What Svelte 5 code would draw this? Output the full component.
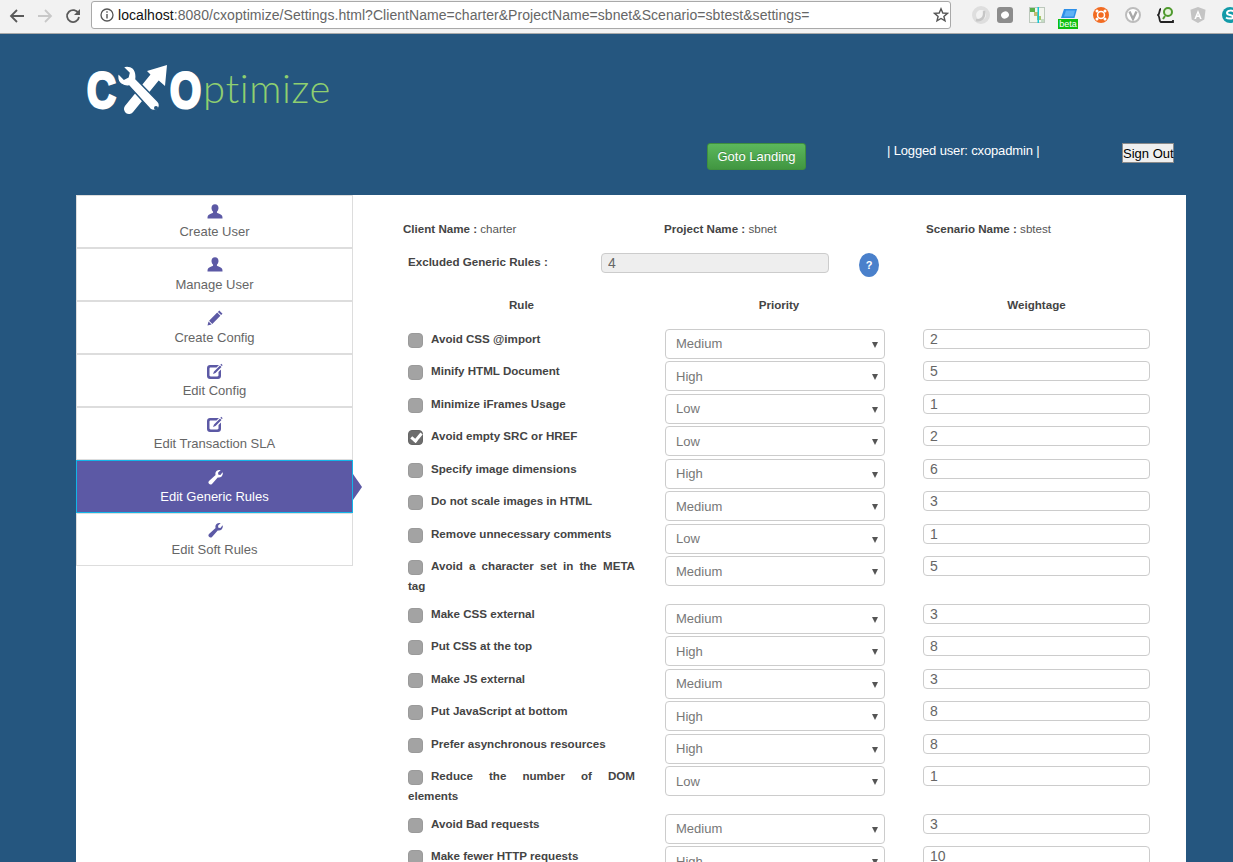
<script>
  const nav = [
    { label: 'Create User', icon: 'user' },
    { label: 'Manage User', icon: 'user' },
    { label: 'Create Config', icon: 'pencil' },
    { label: 'Edit Config', icon: 'edit' },
    { label: 'Edit Transaction SLA', icon: 'edit' },
    { label: 'Edit Generic Rules', icon: 'wrench', active: true },
    { label: 'Edit Soft Rules', icon: 'wrench' }
  ];
  const rules = [
    ['Avoid CSS @import', 'Medium', 2],
    ['Minify HTML Document', 'High', 5],
    ['Minimize iFrames Usage', 'Low', 1],
    ['Avoid empty SRC or HREF', 'Low', 2, true],
    ['Specify image dimensions', 'High', 6],
    ['Do not scale images in HTML', 'Medium', 3],
    ['Remove unnecessary comments', 'Low', 1],
    ['Avoid a character set in the META tag', 'Medium', 5],
    ['Make CSS external', 'Medium', 3],
    ['Put CSS at the top', 'High', 8],
    ['Make JS external', 'Medium', 3],
    ['Put JavaScript at bottom', 'High', 8],
    ['Prefer asynchronous resources', 'High', 8],
    ['Reduce the number of DOM elements', 'Low', 1],
    ['Avoid Bad requests', 'Medium', 3],
    ['Make fewer HTTP requests', 'High', 10]
  ];
</script>

{#snippet glyph(name)}
  <svg class="glyph" viewBox="0 0 16 16" aria-hidden="true">
    {#if name === 'user'}
      <path d="M8 0.300c-2.200 0-3.500 1.600-3.500 3.700 0 1.500 0.700 2.800 1.500 3.600 0.300 0.400 0.200 1-0.300 1.300-1.800 0.800-4.300 1.300-4.900 3.100-0.300 0.800-0.300 1.600-0.300 2.500h15c0-0.900 0-1.700-0.300-2.500-0.600-1.800-3.100-2.300-4.900-3.100-0.500-0.300-0.600-0.900-0.300-1.300 0.800-0.800 1.500-2.100 1.500-3.600 0-2.100-1.300-3.700-3.500-3.700z"/>
    {:else if name === 'pencil'}
      <path d="M12.300 0.500l3.200 3.200-1.400 1.400-3.200-3.200zM10.200 2.600l3.200 3.200-8.100 8.100-3.200-3.200zM1.500 11.400l3.100 3.100-4.100 1z"/>
    {:else if name === 'edit'}
      <path d="M3 2h9l-2.500 2.500H3.700c-.7 0-1.200.5-1.200 1.200v6.600c0 .7.500 1.200 1.200 1.200h6.600c.7 0 1.200-.5 1.200-1.200V9l2.500-2.500V13c0 1.700-1.300 3-3 3H3c-1.700 0-3-1.300-3-3V5c0-1.700 1.300-3 3-3z"/>
      <path d="M13 2.500l1.500 1.500-6 6-2.500 1 1-2.500zM14.300 0.800l1.400 1.400-.9.900-1.400-1.400z"/>
    {:else}
      <path d="M15.600 3.300c.5 1.500.1 3.100-1 4.200-1.100 1-2.600 1.300-3.900.9L5 14.900c-.8.800-2.200.8-3-.1-.8-.8-.8-2.100 0-2.900l6.600-5.800c-.5-1.400-.2-3 .9-4.100C10.600 1 12.200.6 13.700 1.100L11 3.700l.4 2 2 .4z"/>
    {/if}
  </svg>
{/snippet}

<div class="page">
  <div class="chrome">
    <svg class="tool" viewBox="0 0 16 16"><path d="M15 8H2.500M8 2L2 8l6 6" fill="none" stroke="#5a5a5a" stroke-width="1.800"/></svg>
    <svg class="tool" viewBox="0 0 16 16"><path d="M1 8h12.500M8 2l6 6-6 6" fill="none" stroke="#c8c8c8" stroke-width="1.800"/></svg>
    <svg class="tool" viewBox="0 0 16 16"><path d="M13.500 5.500A6 6 0 1 0 14 9" fill="none" stroke="#5a5a5a" stroke-width="1.800"/><path d="M15 1v6H9z" fill="#5a5a5a"/></svg>
    <div class="omni">
      <svg class="info" viewBox="0 0 14 14"><circle cx="7" cy="7" r="6" fill="none" stroke="#555" stroke-width="1.300"/><path d="M6.300 6h1.400v4.500H6.300zM6.300 3.300h1.400v1.400H6.300z" fill="#555"/></svg>
      <span class="url"><b>localhost</b>:8080/cxoptimize/Settings.html?ClientName=charter&amp;ProjectName=sbnet&amp;Scenario=sbtest&amp;settings=</span>
      <svg class="star" viewBox="0 0 16 16"><path d="M8 1.800l1.800 4.200 4.600.4-3.500 3 1.100 4.500L8 11.500l-4 2.400 1.100-4.500-3.500-3 4.600-.4z" fill="none" stroke="#555" stroke-width="1.400"/></svg>
    </div>
    <div class="exts">
      <svg class="ext e1" viewBox="0 0 20 20"><circle cx="10" cy="10" r="7" fill="none" stroke="#dedede" stroke-width="4"/><path d="M5 15c5 1 9-2 8-9" fill="none" stroke="#c6c6c6" stroke-width="2.500"/></svg>
      <svg class="ext e2" viewBox="0 0 16 16"><rect width="16" height="16" rx="3" fill="#8c8c8c"/><ellipse cx="8" cy="8" rx="4" ry="3.500" fill="#fff" transform="rotate(-30 8 8)"/></svg>
      <svg class="ext e3" viewBox="0 0 16 16"><rect x=".5" y=".5" width="15" height="15" fill="#f2f5ee" stroke="#bcc8bc"/><rect x="1" y="1" width="5" height="4" fill="#59b04a"/><rect x="5" y="5" width="4" height="4" fill="#c2bb6e"/><rect x="8" y="9" width="4" height="4" fill="#a7c86a"/><rect x="12" y="12" width="3" height="3" fill="#c4dcc4"/><rect x="8.500" y="0" width="1.500" height="16" fill="#14c7d3"/></svg>
      <div class="ext e4">
        <svg viewBox="0 0 16 11"><path d="M3 1h13l-2.500 9H0z" fill="#2d8fe8"/><path d="M5 2.500h9l-1.500 6H3z" fill="#5fb2f5"/></svg>
        <span class="beta">beta</span>
      </div>
      <svg class="ext e5" viewBox="0 0 16 16"><circle cx="8" cy="8" r="8" fill="#f26b21"/><circle cx="8" cy="8" r="3.500" fill="none" stroke="#fff" stroke-width="1.500"/><circle cx="4" cy="4" r="1.500" fill="#fff"/><circle cx="12" cy="4" r="1.500" fill="#fff"/><circle cx="4" cy="12" r="1.500" fill="#fff"/><circle cx="12" cy="12" r="1.500" fill="#fff"/></svg>
      <svg class="ext e6" viewBox="0 0 16 16"><circle cx="8" cy="8" r="7" fill="#fff" stroke="#bdbdbd" stroke-width="2"/><path d="M4.500 4.500L8 12l3.500-7.500" fill="none" stroke="#a9a9a9" stroke-width="2.400"/></svg>
      <svg class="ext e7" viewBox="0 0 18 18"><path d="M4 3C2 3 3 8 1 9c2 1 1 7 3 7h12v-2" fill="none" stroke="#222" stroke-width="1.800"/><circle cx="11" cy="6" r="4" fill="#e8f4e0" stroke="#4f9a2e" stroke-width="2"/><path d="M8 10l-2 3" stroke="#4f9a2e" stroke-width="2"/></svg>
      <svg class="ext e8" viewBox="0 0 16 16"><path d="M8 0l7.500 2.700-1.200 9.800L8 16l-6.300-3.500L.5 2.700z" fill="#c4c4c4"/><path d="M8 3L4.300 12h1.700l.8-2h2.400l.8 2h1.700zM7.300 8.500L8 6.500l.7 2z" fill="#fff"/></svg>
      <svg class="ext e9" viewBox="0 0 16 16"><circle cx="8" cy="8" r="8" fill="#129aa8"/><path d="M12 5c-1-2-7-2-7 1 0 3 6 1 6 4 0 2-5 2-7 .5" fill="none" stroke="#fff" stroke-width="2"/></svg>
    </div>
  </div>

  <header>
    <div class="logo">
      <span class="cx">C</span>
      <svg class="tools" viewBox="0 0 50 50">
        <path d="M12 44L38 12" stroke="#fff" stroke-width="10" stroke-linecap="round"/>
        <path d="M30 6L50 0l-2 21-8-7-5-3z" fill="#fff"/>
        <path d="M10 1c-2 0-3 .5-4 1l6 6-1 4-4 2-6-6c-1 5 0 9 3 11 3 2 6 2.500 8 2l21 23c2 2 6 2 8 0 2-2 2-5.500 0-7.500L19 14c.5-4 0-8-3-11-2-2-4-2-6-2z" fill="#fff" stroke="#25567f" stroke-width="1.500"/>
        <circle cx="39" cy="43" r="2" fill="#25567f"/>
      </svg>
      <span class="cx o">O</span>
      <span class="ptimize">ptimize</span>
    </div>
    <div class="actions">
      <button class="goto">Goto Landing</button>
      <span class="logged">| Logged user: cxopadmin |</span>
      <button class="signout">Sign Out</button>
    </div>
  </header>

  <main>
    <nav>
      {#each nav as item}
        <a class="item" class:active={item.active} href="#top">
          {@render glyph(item.icon)}
          <span>{item.label}</span>
        </a>
      {/each}
    </nav>

    <section>
      <div class="names">
        <div><b>Client Name :</b> charter</div>
        <div><b>Project Name :</b> sbnet</div>
        <div><b>Scenario Name :</b> sbtest</div>
      </div>
      <div class="excluded">
        <b>Excluded Generic Rules :</b>
        <input class="field readonly" value="4" readonly />
        <span class="help">?</span>
      </div>
      <div class="grid heads">
        <b>Rule</b><b>Priority</b><b>Weightage</b>
      </div>
      <div class="grid">
        {#each rules as [name, prio, weight, checked]}
          <label class="rule"><input type="checkbox" checked={!!checked} /><span>{name}</span></label>
          <div class="select">
            <select class="prio" value={prio}>
              <option>Medium</option><option>High</option><option>Low</option>
            </select>
          </div>
          <input class="field" value={weight} />
        {/each}
      </div>
    </section>
  </main>
</div>

<style>
  :global(html), :global(body) { margin: 0; height: 862px; overflow: hidden; }
  .page { height: 862px; overflow: hidden; background: #25567f; font-family: "Liberation Sans", Arial, sans-serif; }

  .chrome { height: 33px; background: #f2f2f2; border-bottom: 1px solid #a9a9a9; display: flex; align-items: center; position: relative; }
  .tool { width: 16px; height: 16px; margin-left: 12px; flex: none; margin-top: -2px; }
  .tool:first-child { margin-left: 9px; }
  .omni { margin-left: 10px; width: 860px; height: 28px; box-sizing: border-box; background: #fff; border: 1px solid #a9a9a9; border-radius: 3px; display: flex; align-items: center; flex: none; margin-top: -3px; }
  .info { width: 14px; height: 14px; margin-left: 8px; flex: none; }
  .url { margin-left: 4px; font-size: 14px; letter-spacing: .05px; color: #666; white-space: nowrap; flex: 1; }
  .url b { font-weight: normal; color: #111; }
  .star { width: 16px; height: 16px; margin-right: 1px; flex: none; }
  .exts { display: flex; align-items: center; flex: none; margin-top: -3px; }
  .ext { width: 16px; height: 16px; flex: none; }
  .e1 { width: 20px; height: 20px; margin-left: 20px; }
  .e2 { margin-left: 6px; }
  .e3 { margin-left: 16px; }
  .e4 { margin-left: 16px; position: relative; height: 16px; }
  .e4 svg { display: block; width: 16px; height: 11px; margin-top: 1px; }
  .beta { position: absolute; left: -3px; top: 12px; width: 20px; height: 10px; background: #0fbf0f; color: #fff; font-size: 9px; line-height: 10px; text-align: center; }
  .e5 { margin-left: 16px; }
  .e6 { margin-left: 16px; }
  .e7 { margin-left: 16px; width: 18px; height: 18px; }
  .e8 { margin-left: 15px; }
  .e9 { margin-left: 16px; }

  header { height: 161px; padding-left: 76px; box-sizing: border-box; }
  .logo { display: flex; align-items: center; height: 109px; padding-left: 11px; box-sizing: border-box; color: #fff; }
  .cx { display: inline-block; width: 29px; flex: none; font-weight: 700; font-size: 50px; line-height: 1; margin-top: 4px; transform: scaleX(.8); transform-origin: left center; -webkit-text-stroke: 3px #fff; }
  .tools { width: 50px; height: 50px; margin: 3px 3px 0 1px; flex: none; }
  .ptimize { font-family: Lato, sans-serif; font-weight: 300; font-size: 40px; letter-spacing: .6px; color: #8fcf70; margin-left: 4px; margin-top: -1px; line-height: 1; }

  .actions { display: flex; align-items: flex-start; }
  button { font-family: inherit; }
  .goto { margin-left: 631px; width: 99px; height: 27px; padding: 0; font-size: 13px; color: #fff; background: linear-gradient(#5cb85c, #419641); border: 1px solid #3e8f3e; border-radius: 3px; text-shadow: 0 -1px 0 rgba(0,0,0,.2); }
  .logged { margin-left: 81px; font-size: 13px; letter-spacing: -.15px; line-height: 15px; color: #fff; width: 235px; }
  .signout { width: 52px; height: 20px; padding: 0; font-size: 13px; color: #000; background: #efefef; border: 1px solid #8a8a8a; white-space: nowrap; }

  main { width: 1110px; margin-left: 76px; background: #fff; display: flex; align-items: flex-start; min-height: 667px; }
  nav { width: 277px; flex: none; }
  .item { position: relative; display: flex; flex-direction: column; align-items: center; height: 53px; box-sizing: border-box; padding-top: 8px; border: 1px solid #ddd; color: #666; font-size: 13px; line-height: 20px; text-decoration: none; }
  .glyph { width: 16px; height: 16px; fill: #5c59a5; display: block; margin-bottom: 2px; }
  .item.active { background: #5c59a5; color: #fff; border-color: #12b5e8; }
  .item.active .glyph { fill: #fff; }
  .item.active::after { content: ""; position: absolute; right: -10px; top: 13px; border-left: 9px solid #5c59a5; border-top: 13px solid transparent; border-bottom: 13px solid transparent; }

  section { flex: 1; padding-left: 50px; font-size: 11.6px; color: #555; }
  section b { color: #444; }
  .names { display: grid; grid-template-columns: 261px 262px 1fr; padding-top: 26px; line-height: 15px; }
  .excluded { display: flex; align-items: flex-start; margin-top: 17px; padding-left: 5px; height: 44px; line-height: 20px; }
  .excluded b { width: 193px; flex: none; margin-top: -1px; }
  .field { box-sizing: border-box; height: 20px; width: 227px; padding: 0 6px; font: 14px "Liberation Sans", Arial, sans-serif; color: #666; background: #fff; border: 1px solid #ccc; border-radius: 4px; outline: none; }
  .readonly { width: 228px; background: #eee; flex: none; }
  .help { margin-left: 30px; margin-top: 0; width: 20px; height: 24px; border-radius: 50%; background: #4a80cb; color: #fff; font-weight: 700; font-size: 11px; line-height: 25px; text-align: center; flex: none; }

  .grid { display: grid; grid-template-columns: 227px 220px 235px; column-gap: 30px; padding-left: 5px; align-items: start; }
  .grid > :nth-child(3n+3) { margin-left: 8px; }
  .heads { height: 31.900px; text-align: center; line-height: 15px; }
  .heads b:nth-child(2) { padding-left: 8px; }
  .rule { display: block; font-weight: 700; color: #444; line-height: 20px; text-align: justify; margin-bottom: 7.500px; }
  .rule input { appearance: none; width: 15px; height: 15px; margin: 0 8px 0 0; vertical-align: -5px; border-radius: 4px; background: #a3a3a3; border: 1px solid #9a9a9a; box-sizing: border-box; position: relative; }
  .rule input:checked { background: #6d6d6d; border-color: #666; }
  .rule input:checked::after { content: ""; position: absolute; left: 3.500px; top: 0; width: 4px; height: 8px; border: solid #fff; border-width: 0 3px 3px 0; transform: rotate(40deg); }
  .select { position: relative; height: 32.500px; }
  .select::after { content: ""; position: absolute; right: 7px; top: 13px; border-top: 6px solid #555; border-left: 3px solid transparent; border-right: 3px solid transparent; pointer-events: none; }
  .prio { appearance: none; height: 30px; width: 220px; box-sizing: border-box; padding: 0 10px; font: 13px "Liberation Sans", Arial, sans-serif; color: #777; background: #fff; border: 1px solid #ccc; border-radius: 4px; outline: none; }
</style>
